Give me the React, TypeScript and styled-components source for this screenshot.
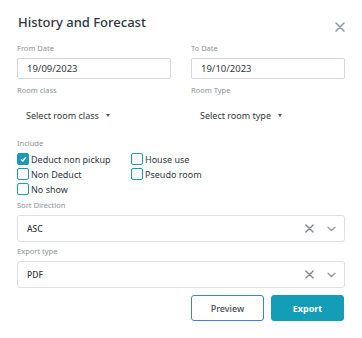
import React from "react";
import styled, { createGlobalStyle } from "styled-components";

const GlobalStyle = createGlobalStyle`
  body {
    margin: 0;
    background: #ffffff;
    font-family: "Noto Sans", "Open Sans", sans-serif;
    color: #333840;
  }
`;

const Modal = styled.div`
  width: 362px;
  height: 338px;
  box-sizing: border-box;
  padding: 10px 17px 0 17px;
`;

const Header = styled.div`
  display: flex;
  justify-content: space-between;
  align-items: flex-start;
  height: 33px;
`;

const Title = styled.h1`
  margin: 1px 0 0 1px;
  font-size: 13px;
  line-height: 22px;
  font-weight: 500;
  color: #2f343b;
`;

const CloseButton = styled.button`
  margin-top: 12px;
  margin-right: 0;
  padding: 0;
  border: none;
  background: none;
  width: 10px;
  height: 10px;
  display: flex;
  cursor: pointer;
`;

const Grid = styled.div`
  display: grid;
  grid-template-columns: 1fr 1fr;
  column-gap: 20px;
`;

const Field = styled.div<{ $mb?: number }>`
  display: flex;
  flex-direction: column;
  margin-bottom: ${(p) => p.$mb ?? 0}px;
`;

const Label = styled.label`
  font-size: 7.5px;
  line-height: 10px;
  color: #8b939c;
  margin-bottom: 5px;
`;

const DateInput = styled.input`
  box-sizing: border-box;
  height: 21px;
  width: 100%;
  border: 1px solid #d4d8dd;
  border-radius: 2px;
  padding: 0 9px;
  font-family: inherit;
  font-size: 9.5px;
  color: #333840;
  outline: none;
`;

const Dropdown = styled.button`
  display: flex;
  align-items: center;
  gap: 7px;
  margin-top: 5px;
  padding: 0 0 0 9px;
  height: 20px;
  border: none;
  background: none;
  font-family: inherit;
  font-size: 9px;
  color: #333840;
  cursor: pointer;
`;

const Caret = styled.span`
  width: 0;
  height: 0;
  border-left: 2.5px solid transparent;
  border-right: 2.5px solid transparent;
  border-top: 3px solid #555b63;
`;

const Checks = styled.div`
  display: grid;
  grid-template-columns: 114px auto;
  row-gap: 3px;
  margin-bottom: 5px;
`;

const CheckRow = styled.label`
  display: flex;
  align-items: center;
  gap: 2px;
  font-size: 9px;
  line-height: 11px;
  color: #333840;
`;

const Box = styled.span<{ $on?: boolean }>`
  box-sizing: border-box;
  width: 12px;
  height: 12px;
  border: 1.3px solid #1b9bb2;
  border-radius: 2px;
  background: ${(p) => (p.$on ? "#1b9bb2" : "#ffffff")};
  display: flex;
  align-items: center;
  justify-content: center;
`;

const SelectBox = styled.div`
  box-sizing: border-box;
  height: 27px;
  border: 1px solid #dcdfe4;
  border-radius: 3px;
  display: flex;
  align-items: center;
  padding: 0 8px 0 9px;
  font-size: 8.5px;
  font-weight: 500;
  color: #333840;
`;

const SelectValue = styled.span`
  flex: 1;
`;

const SelectIcons = styled.div`
  display: flex;
  align-items: center;
  gap: 13px;
`;

const Footer = styled.div`
  display: flex;
  justify-content: flex-end;
  gap: 7px;
  margin-top: 7px;
  padding-right: 1px;
`;

const Button = styled.button<{ $primary?: boolean }>`
  box-sizing: border-box;
  width: 73px;
  height: 26px;
  border-radius: 3px;
  border: 1px solid ${(p) => (p.$primary ? "#139db7" : "#3f7fe0")};
  background: ${(p) => (p.$primary ? "#139db7" : "#ffffff")};
  color: ${(p) => (p.$primary ? "#ffffff" : "#464c55")};
  font-family: inherit;
  font-size: 9px;
  font-weight: ${(p) => (p.$primary ? 700 : 500)};
  cursor: pointer;
`;

const XIcon = ({ size = 9, color = "#8f98a6", width = 1.6 }) => (
  <svg width={size} height={size} viewBox="0 0 10 10">
    <path d="M1 1L9 9M9 1L1 9" stroke={color} strokeWidth={width} strokeLinecap="round" />
  </svg>
);

const Chevron = () => (
  <svg width="9" height="6" viewBox="0 0 9 6">
    <path d="M1 1.2L4.5 4.6L8 1.2" stroke="#98a0ab" strokeWidth="1.4" fill="none" strokeLinecap="round" />
  </svg>
);

const Check = ({ on, label }: { on?: boolean; label: string }) => (
  <CheckRow>
    <Box $on={on}>
      {on && (
        <svg width="7" height="6" viewBox="0 0 7 6">
          <path d="M1 3.2L2.8 5L6 1" stroke="#ffffff" strokeWidth="1.3" fill="none" />
        </svg>
      )}
    </Box>
    {label}
  </CheckRow>
);

const Select = ({ value }: { value: string }) => (
  <SelectBox>
    <SelectValue>{value}</SelectValue>
    <SelectIcons>
      <XIcon size={9} color="#7f8792" width={1.5} />
      <Chevron />
    </SelectIcons>
  </SelectBox>
);

export default function App() {
  return (
    <>
      <GlobalStyle />
      <Modal>
        <Header>
          <Title>History and Forecast</Title>
          <CloseButton>
            <XIcon size={10} />
          </CloseButton>
        </Header>

        <Grid>
          <Field $mb={6}>
            <Label>From Date</Label>
            <DateInput defaultValue="19/09/2023" />
          </Field>
          <Field $mb={6}>
            <Label>To Date</Label>
            <DateInput defaultValue="19/10/2023" />
          </Field>
          <Field $mb={13}>
            <Label>Room class</Label>
            <Dropdown>
              Select room class <Caret />
            </Dropdown>
          </Field>
          <Field $mb={13}>
            <Label>Room Type</Label>
            <Dropdown>
              Select room type <Caret />
            </Dropdown>
          </Field>
        </Grid>

        <Field>
          <Label>Include</Label>
          <Checks>
            <Check on label="Deduct non pickup" />
            <Check label="House use" />
            <Check label="Non Deduct" />
            <Check label="Pseudo room" />
            <Check label="No show" />
          </Checks>
        </Field>

        <Field $mb={4}>
          <Label>Sort Direction</Label>
          <Select value="ASC" />
        </Field>
        <Field>
          <Label>Export type</Label>
          <Select value="PDF" />
        </Field>

        <Footer>
          <Button>Preview</Button>
          <Button $primary>Export</Button>
        </Footer>
      </Modal>
    </>
  );
}
